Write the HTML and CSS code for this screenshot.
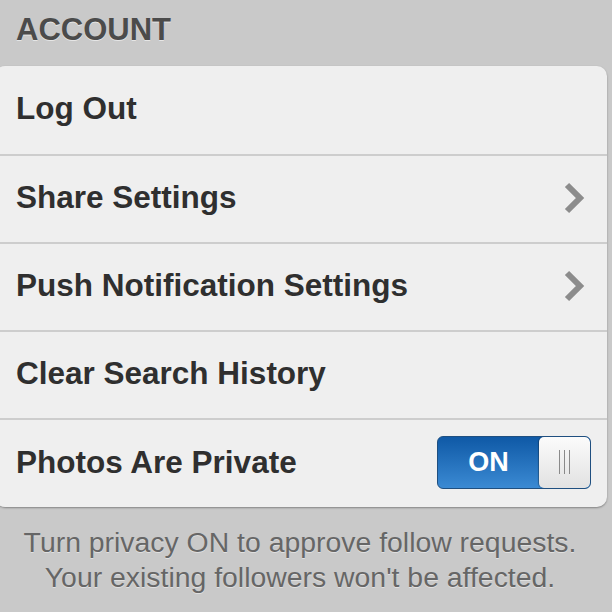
FILE: index.html
```html
<!DOCTYPE html>
<html>
<head>
    <title>Account Settings</title>
    <link rel="stylesheet" href="styles.css">
</head>
<body>
    <div class="page">
        <h2 class="section-title">ACCOUNT</h2>

        <div class="card">
            <div class="row">
                <span class="label">Log Out</span>
            </div>
            <div class="row">
                <span class="label">Share Settings</span>
                <svg class="chevron" width="22" height="32" viewBox="0 0 22 32">
                    <polyline points="4,3 17,16 4,29" fill="none" stroke="#8c8c8c" stroke-width="6"/>
                </svg>
            </div>
            <div class="row">
                <span class="label">Push Notification Settings</span>
                <svg class="chevron" width="22" height="32" viewBox="0 0 22 32">
                    <polyline points="4,3 17,16 4,29" fill="none" stroke="#8c8c8c" stroke-width="6"/>
                </svg>
            </div>
            <div class="row">
                <span class="label">Clear Search History</span>
            </div>
            <div class="row">
                <span class="label">Photos Are Private</span>
                <div class="toggle">
                    <span class="toggle-on">ON</span>
                    <span class="knob">
                        <i></i><i></i><i></i>
                    </span>
                </div>
            </div>
        </div>

        <p class="note">Turn privacy ON to approve follow requests.<br>Your existing followers won't be affected.</p>
    </div>
</body>
</html>
```

FILE: styles.css
```css
body {
    margin: 0;
    background: #c9c9c9;
    font-family: "Liberation Sans", Arial, sans-serif;
    overflow: hidden;
}
.page {
    height: 612px;
}
.section-title {
    margin: 0;
    padding: 12px 0 0 16px;
    height: 66px;
    box-sizing: border-box;
    font-size: 31px;
    font-weight: bold;
    color: #4b4b4b;
    text-shadow: 0 1px 0 #e6e6e6;
    line-height: 36px;
}
.card {
    margin: 0 5px 0 -5px;
    background: #efefef;
    border-radius: 10px;
    box-shadow: 0 1px 2px rgba(0, 0, 0, 0.35);
}
.row {
    display: flex;
    align-items: center;
    justify-content: space-between;
    height: 88px;
    padding: 0 20px 3px 21px;
    border-top: 2px solid #cdcdcd;
    box-sizing: border-box;
}
.row:first-child {
    border-top: none;
}
.row:last-child {
    height: 89px;
}
.label {
    font-size: 31.5px;
    font-weight: bold;
    color: #2f2f2f;
}
.chevron {
    margin-right: 2px;
}
.toggle {
    display: flex;
    width: 154px;
    height: 53px;
    border: 1px solid #1f4f80;
    border-radius: 6px;
    overflow: hidden;
    box-sizing: border-box;
    margin-right: -4px;
    background: linear-gradient(#0f59a6, #3b8ad3);
}
.toggle-on {
    flex: 1;
    display: flex;
    align-items: center;
    justify-content: center;
    color: #fff;
    font-size: 27px;
    font-weight: bold;
}
.knob {
    width: 51px;
    display: flex;
    align-items: center;
    justify-content: center;
    gap: 4px;
    border-radius: 5px;
    background: linear-gradient(#fbfbfb, #e2e2e2);
    box-shadow: -1px 0 1px rgba(0, 0, 0, 0.3);
}
.knob i {
    width: 1px;
    height: 24px;
    background: #8a8a8a;
}
.note {
    margin: 18px 12px 0 0;
    text-align: center;
    font-size: 28.4px;
    line-height: 35px;
    color: #666;
    text-shadow: 0 1px 0 #e0e0e0;
}
```
